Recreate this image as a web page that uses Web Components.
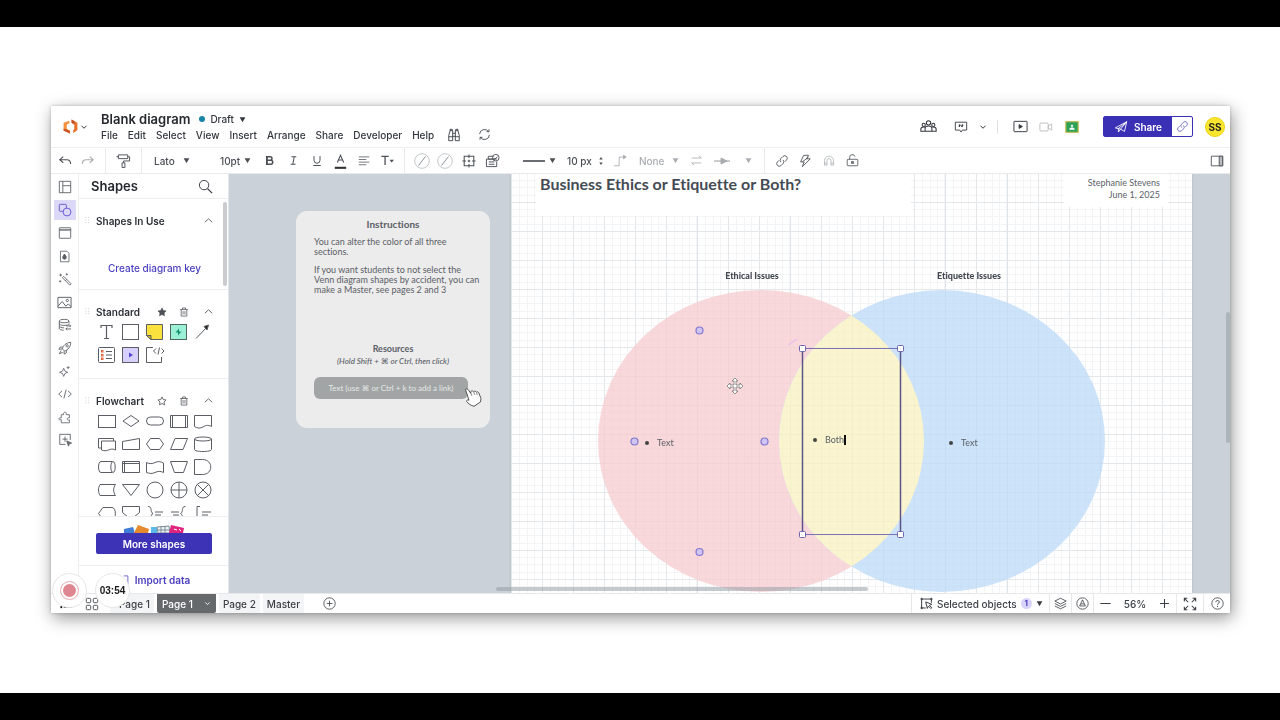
<!DOCTYPE html>
<html lang="en">
<head>
<meta charset="utf-8">
<title>Blank diagram</title>
<style>
  html, body { height: 100%; }
  body {
    margin: 0; background: #000; color: #33373d;
    font: 500 10px/12px Inter, "Liberation Sans", sans-serif;
  }
</style>
</head>
<body>
<app-stage>
  <diagram-app></diagram-app>
</app-stage>

<script>
const RESET = `
  *, *::before { box-sizing: border-box; }
  button, select, input { font: inherit; color: inherit; background: none; border: 0; padding: 0; margin: 0; outline: 0; appearance: none; }
  button { display: inline-flex; align-items: center; justify-content: center; white-space: nowrap; }
  h1, h2, h3, p, ul { margin: 0; padding: 0; font: inherit; }
  a { color: inherit; text-decoration: none; }
`;

function define(name, css, html) {
  customElements.define(name, class extends HTMLElement {
    constructor() {
      super();
      const root = this.attachShadow({ mode: 'open' });
      root.innerHTML = `<style>${RESET}${css}</style>${typeof html === 'function' ? html(this) : html}`;
    }
  });
}

/* ---------- icons: 16-unit box, one-unit strokes ---------- */
const ICONS = {
  logo: '<g stroke="none"><path fill="#f5903d" d="M1.500 4.500 7 2.500V5L4.500 6v4.500l3 1.500v2.500l-6-3z"/><path fill="#cf5424" d="M1.500 10l3 .5 3 1.500v2.500l-6-2.500z"/><path fill="#e8742c" d="M9 1.500 14.500 4.500v7L10.500 14v-2.500l1-.8V6L9 4.500z"/><path fill="#c94f20" d="M9 1.500l3 1.700-.5 2.800L9 4.500z"/></g>',
  chevron: '<path stroke-width="2" d="M3 5.500 8 10.500 13 5.500"/>',
  up: '<path stroke-width="1.500" d="M1.500 11 8 5l6.500 6"/>',
  caret: '<path fill="currentColor" stroke="none" d="M1.500 3h13L8 14z"/>',
  spin: '<path fill="currentColor" stroke="none" d="M4.500 5h7L8 0zM4.500 11h7L8 16z"/>',
  binoc: '<path d="M2 14.500v-6L3.500 3h3v11.500zM9.500 14.500V3h3L14 8.500v6zM6.500 6h3M6.500 9.500h3M2 10h4.500M9.500 10H14M3.500 3V1.500h2.500V3M10 3V1.500h2.500V3"/>',
  sync: '<path d="M2 7.500a6 6 0 0 1 11-3M14 8.500a6 6 0 0 1-11 3M13.500 1.500v3h-3M2.500 14.500v-3h3"/>',
  people: '<circle cx="8" cy="4.500" r="2"/><circle cx="3.500" cy="6.500" r="1.500"/><circle cx="12.500" cy="6.500" r="1.500"/><path d="M4.800 12.500v-2.500c0-1.700 1.200-2.500 3.200-2.500s3.200.8 3.200 2.500v2.500zM4.500 12.500H.8v-2c0-1.300.8-2 2.700-2h1M11.500 12.500h3.700v-2c0-1.300-.8-2-2.700-2h-1"/>',
  comment: '<path d="M1.500 2.500h13v9h-5L8 13.800 6.500 11.500h-5z"/><path fill="currentColor" d="M6 5.500h1v1L6 8zM9 5.500h1v1L9 8z"/>',
  play: '<rect x="1" y="2.500" width="14" height="11" rx=".5"/><path fill="currentColor" d="M6.500 6v4l3.500-2z"/>',
  camera: '<rect x="1" y="3.500" width="9.500" height="9" rx="1"/><path d="M10.500 7l4-2.500v7l-4-2.500z"/>',
  classroom: '<rect x="1" y="2" width="14" height="12" fill="#2da35a" stroke="#b9b43a" stroke-width="1.200"/><path fill="#fff" stroke="none" d="M8 5.300a1.300 1.300 0 1 1 0 2.600 1.300 1.300 0 0 1 0-2.600zM5 11c0-1.600 1.300-2.300 3-2.300s3 .7 3 2.300z"/>',
  plane: '<path d="M1.500 9 14.500 2l-2.500 11-4.500-2.500zM5 9.800 14.500 2l-7 8.500M5 9.800v4l2.500-3.300"/>',
  link: '<path d="M6.800 9.200a2.900 2.900 0 0 1 0-4.100l2.300-2.300a2.900 2.900 0 0 1 4.100 4.100l-1.800 1.800M9.200 6.800a2.900 2.900 0 0 1 0 4.100l-2.300 2.300a2.900 2.900 0 0 1-4.100-4.100l1.800-1.800"/>',
  undo: '<path stroke-width="1.200" d="M6 3 2 6.500 6 10M2 6.500h8c3 0 4.500 1.500 4.500 5"/>',
  redo: '<path stroke-width="1.200" d="M10 3l4 3.500L10 10M14 6.500H6c-3 0-4.500 1.500-4.500 5"/>',
  roller: '<path d="M2.500 2h10v4h-10zM12.500 4h2v4.500h-6.500v2M.5 4h2M6.500 10.500h3v5h-3z"/>',
  bold: '<path stroke-width="2.200" d="M4 2.500h5a2.600 2.600 0 0 1 0 5.200H4zM4 7.700h5.800a2.900 2.900 0 0 1 0 5.800H4zM4.500 2v12"/>',
  italic: '<path stroke-width="1.500" d="M5 2.500h7M4 13.500h7M9 2.500l-2 11"/>',
  underline: '<path stroke-width="1.300" d="M4 1.500V7a4 4 0 0 0 8 0V1.500M3 14h10"/>',
  color: '<path d="M4 10.500 8 1.500l4 9M5.300 7.500h5.400" stroke-width="1.300"/><path stroke-width="2.600" stroke="#333" d="M1 17h14"/>',
  align: '<path d="M1 2.500h14M1 6h10M1 9.500h14M1 13h10"/>',
  text: '<path stroke-width="1.600" d="M.5 3h9M5 3v10.500"/><path fill="currentColor" stroke="none" d="M10.500 7H16l-2.800 3.500z"/>',
  nofill: '<circle cx="8" cy="8" r="7.300" stroke="#c4c7ca"/><path stroke="#8e9296" d="M4.500 12.500l7-9"/>',
  frame: '<path stroke-width="1.200" d="M2.500 2.500h11v11h-11zM8 .5v4M8 11.500v4M.5 8h4M11.500 8h4M8 6.500v3M6.500 8h3"/>',
  stamp: '<path d="M9 3.500H3.500v3h9M1.500 6.500H11M1.500 6.500v8h11V9M4 9.500h6M4 12h6"/><circle cx="11.500" cy="5" r="3.500"/><path d="M10 5l1.200 1.200L13.200 4"/>',
  line: '<path stroke-width="1.200" d="M0 8h16"/>',
  elbow: '<path d="M1 13.500h6v-10h6"/><path fill="currentColor" d="M12 1.500v4l3-2z"/>',
  swap: '<path d="M2 5h12M11 2.500 14 5M14 11H2M5 13.500 2 11"/>',
  arrow: '<path stroke-width="1.200" d="M0 8h16"/><path fill="currentColor" d="M7 5v6l6-3z"/>',
  bolt: '<path d="M6.500 1.500h5.500L9.800 5.500H14L5 14.500l2-5.500H3z"/><path d="M12 3.500 5 9"/>',
  magnet: '<path d="M2 13.500V7.500a6 6 0 0 1 12 0v6h-3.300V7.500a2.700 2.700 0 0 0-5.400 0v6zM2 11h3.300M10.700 11H14"/>',
  lock: '<rect x="1.500" y="6.500" width="13" height="8" rx="1"/><path d="M4.500 6.500V4a3.300 3.300 0 0 1 6.500-.8"/><path stroke-width="1.300" d="M7 9.500h2v2H7z"/>',
  dock: '<path d="M1.500 2.500h13v11h-13z"/><path fill="#b6b9bd" d="M10.500 2.500h4v11h-4z"/>',
  layout: '<path d="M1.500 1.500h13v13h-13zM5.500 1.500v13M5.500 6.500h9"/>',
  shapes: '<rect x="1.500" y="1.500" width="8" height="8" rx="1"/><circle cx="10.300" cy="10.300" r="4.500" fill="#dcd8f8"/>',
  window: '<rect x="1.500" y="2" width="13" height="12" rx=".5"/><path d="M1.500 4.500h13" stroke-width="1.500"/>',
  theme: '<path d="M3 1.500h8L13.500 4v10.500H3z"/><path fill="currentColor" d="M8 5c1.500 2 2.200 3 2.200 4.200a2.200 2.200 0 0 1-4.400 0C5.800 8 6.500 7 8 5z"/>',
  wand: '<path d="M6.500 5 5 6.500l8.500 8.500L15 13.500zM8.500 10 10 8.500M3 2v3M1.500 3.500h3M10 1.500v2.400M8.800 2.700h2.400M2.500 9.500v2.400M1.300 10.700h2.400"/>',
  image: '<path d="M1 2.500h14v11H1zM1 12l4.500-5 4 5 2.500-2.500 3 3"/><circle cx="11" cy="5.800" r="1.200"/>',
  data: '<ellipse cx="7" cy="3.500" rx="5.500" ry="2"/><path d="M1.500 3.500v8.500c0 1 2.500 2 5 2M12.500 3.500V6M1.500 6.500c0 1 2.500 2 5.500 2s5.500-.8 5.500-2M1.500 9.300c0 1 2.500 2 5.500 2M9 9h5.500M13 7.500 14.500 9 13 10.500M15 12.500H9M10.500 11 9 12.500 10.500 14"/>',
  rocket: '<path d="M5 9c1-4 4-7 9.500-7.500C14.500 7 11.500 10 7.500 11.500zM5.500 7H2.500L1 9.500l4-.5M9.500 10.500v3L7 15v-3.500M3.500 11 1.500 14.500 5.500 13"/><circle cx="10.500" cy="5.500" r="1.300"/>',
  sparkle: '<path d="M7 4l1.500 3.500L12 9l-3.500 1.500L7 14l-1.500-3.500L2 9l3.500-1.500zM12.500 1.500v3.500M10.800 3.200h3.500"/>',
  code: '<path d="M4.500 4.500.8 8l3.700 3.500M11.500 4.500 15.200 8l-3.700 3.500M9.300 3 6.700 13"/>',
  puzzle: '<path d="M4 4.500h3C5.500.5 11.500.5 10 4.500h4v4c-3.500-1.200-3.500 3.700 0 2.500v3.500H4v-4C0 12 0 7.500 4 8.500z"/>',
  addshape: '<path d="M8.500 13H2V1.500h12V8M8 4v6M5 7h6"/><path fill="#777" d="M10 9l5.500 2.500-2.500.8-1 2.700z"/>',
  search: '<circle cx="6.500" cy="6.500" r="5"/><path d="M10.200 10.200 15 15" stroke-width="1.300"/>',
  grip: '<path stroke="#b9bcc0" stroke-width="1.500" stroke-dasharray="1.500 3" d="M5 2v13M10 2v13"/>',
  starfill: '<path fill="currentColor" d="M8 1.500l2 4.200 4.500.6-3.300 3.200.8 4.600L8 12l-4 2.100.8-4.600L1.500 6.300 6 5.700z"/>',
  star: '<path stroke-width="1.300" d="M8 1.500l2 4.200 4.500.6-3.300 3.200.8 4.600L8 12l-4 2.100.8-4.600L1.500 6.300 6 5.700z"/>',
  trash: '<path stroke-width="1.200" d="M2 4h12M5.500 4V1.500h5V4M3.500 4v10.500h9V4M6.500 6.500v5.500M9.500 6.500v5.500"/>',
  menu: '<path stroke-width="1.400" d="M4.500 12.500H15"/><path stroke="#111" stroke-width="2.400" d="M.5 12.500h2.200"/>',
  pages: '<rect x="1.500" y="1.500" width="5" height="5" rx="1.200"/><rect x="9.500" y="1.500" width="5" height="5" rx="1.200"/><rect x="1.500" y="9.500" width="5" height="5" rx="1.200"/><rect x="9.500" y="9.500" width="5" height="5" rx="1.200"/>',
  addpage: '<circle cx="8" cy="8" r="7"/><path d="M8 4.500v7M4.500 8h7"/>',
  pick: '<path stroke-width="1.200" d="M7 13.500H2v-11h12V7M2 1v3M.5 2.500h3M14 1v3M12.500 2.500h3M2 12v3M.5 13.500h3"/><path stroke-width="1.200" d="M7 6l7.500 3-3 1.200 3 3-1.200 1-3-3L9 14z"/>',
  layers: '<path d="M8 1.500 15 5 8 8.500 1 5zM1 8l7 3.500L15 8M1 11l7 3.500 7-3.500"/>',
  acircle: '<circle cx="8" cy="8" r="7"/><path d="M4.500 11 8 3.500l3.500 7.500zM6 8.500h4"/>',
  minus: '<path stroke-width="1.500" d="M.5 8h15"/>',
  plus: '<path stroke-width="1.500" d="M1.500 8h13M8 1.500v13"/>',
  expand: '<path stroke-width="1.200" d="M1.500 5V1.500H5M1.500 1.500 6 6M11 1.500h3.500V5M14.500 1.500 10 6M1.500 11v3.500H5M1.500 14.500 6 10M11 14.500h3.500V11M14.500 14.500 10 10"/>',
  help: '<circle cx="8" cy="8" r="7"/><path stroke-width="1.200" d="M6 6.300c0-2.600 4.200-2.600 4.200 0C10.200 7.800 8 7.800 8 9.500M8 11v1.300"/>',
  importbox: '<path d="M9 2.500h5.500v11H9M7 5l3 3-3 3"/>'
};
customElements.define('ui-icon', class extends HTMLElement {
  constructor() { super(); this.attachShadow({ mode: 'open' }); }
  connectedCallback() {
    this.shadowRoot.innerHTML = `<style>
      :host { display: inline-block; flex: none; width: var(--size, 14px); height: var(--size, 14px); }
      svg { display: block; width: 100%; height: 100%; overflow: visible; }
    </style><svg viewBox="0 0 16 16" fill="none" stroke="currentColor" aria-hidden="true">${ICONS[this.getAttribute('name')] || ''}</svg>`;
  }
});
const icon = (name, size) => `<ui-icon name="${name}"${size ? ` style="--size:${size}px"` : ''}></ui-icon>`;
const btn = (name, label, size, cls = '') => `<button type="button" class="${cls}" aria-label="${label}">${icon(name, size)}</button>`;

/* ---------- shape tiles: 24 x 20 box ---------- */
const SHAPES = {
  text: '<path stroke-width="1.200" d="M6 6V3.500h11V6M11.500 3.500v13M9 16.500h5"/>',
  box: '<rect x="3.500" y="2.500" width="16" height="15"/>',
  note: '<path fill="#fbe13e" d="M3.500 2.500h16v15H8l-4.500-4z"/><path fill="#d8bd20" d="M3.500 13.500H8v4z"/>',
  green: '<rect x="3.500" y="2.500" width="16" height="15" fill="#9bf0d6" stroke="#51655f"/><path fill="#14946d" stroke="none" d="M12 6.500 8.500 10.500H11v3l3.500-4H12z"/>',
  arrow: '<path d="M5 16.500 16 5"/><path fill="#222" d="M13 4.500 17.500 3 16 8z"/>',
  list: '<rect x="3.500" y="2.500" width="16" height="15" rx="1"/><path d="M11 6.500h6M11 10h6M11 13.500h6"/><g stroke="#e0603a"><rect x="6.500" y="5.500" width="1.500" height="1.500"/><rect x="6.500" y="9.500" width="1.500" height="1.500"/><rect x="6.500" y="13" width="1.500" height="1.500"/></g>',
  purple: '<rect x="3.500" y="2.500" width="16" height="15" fill="#d7cffc"/><path fill="#5346c9" stroke="none" d="M10 7.500v5l4-2.500z"/>',
  codebox: '<path d="M10 2.500H3.500v15h15V12"/><path d="M13 3.500 10.500 6 13 8.500M18.500 3.500 21 6l-2.500 2.500M16.500 2.500 15 9.500"/>',
  rect: '<rect x="3.500" y="4.500" width="17" height="12"/>',
  diamond: '<path d="M12 4.500 20 10l-8 5.500L4 10z"/>',
  pill: '<rect x="3.500" y="6" width="17" height="8" rx="4"/>',
  process: '<path d="M3.500 4.500h17v12h-17zM5.500 4.500v12M18.500 4.500v12"/>',
  doc: '<path d="M3.500 4.500h17v11c-4-2-6-1-8.500.5-3 1.500-5.500 1.500-8.500-.5z"/>',
  docs: '<path d="M6.500 7h14v9c-3-1.500-4.500-1-7 0s-4.500 1-7 0zM6.500 14H3.500V4.500h15V7"/>',
  manual: '<path d="M3.500 7.500 20.500 4.500v11h-17z"/>',
  hex: '<path d="M7.500 4.500h9L20.500 10l-4 5.500h-9L3.500 10z"/>',
  para: '<path d="M8 4.500h12.500l-4.500 11H3.500z"/>',
  cyl: '<path d="M3.500 5v10.500c0 1.300 4 2 8.500 2s8.500-.7 8.500-2V5"/><ellipse cx="12" cy="5" rx="8.500" ry="2"/>',
  das: '<path d="M17 4.500H6c-3.300 0-3.300 11 0 11h11"/><ellipse cx="18" cy="10" rx="2.200" ry="5.500"/>',
  storage: '<path d="M3.500 4.500h17v11h-17zM5.500 4.500v11M3.500 6.500h17"/>',
  tape: '<path d="M3.500 5.500c3 1.500 5.500 1.500 8.500 0s5.500-1 8.500.5v9.500c-3-1.500-5.500-1.500-8.500 0s-5.500 1-8.500 0z"/>',
  trap: '<path d="M3.500 4.500h17l-4 11h-9z"/>',
  delay: '<path d="M3.500 2.500h8c11 0 11 15 0 15h-8z"/>',
  stored: '<path d="M5 4.500h15.500c-2.500 3.500-2.500 7.500 0 11H5c-2-3.500-2-7.500 0-11z"/>',
  merge: '<path d="M3.500 4.500h17L12 15.500z"/>',
  circle: '<circle cx="12" cy="10" r="8"/>',
  or: '<circle cx="12" cy="10" r="8"/><path d="M12 2v16M4 10h16"/>',
  sum: '<circle cx="12" cy="10" r="8"/><path d="M6.300 4.300l11.400 11.400M17.700 4.300 6.300 15.700"/>',
  display: '<path d="M8 4.500h9c4.500 0 4.500 12 0 12H8L3.500 10.500z"/>',
  offpage: '<path d="M3.500 3.500h17v6L12 16.500l-8.500-7z"/>',
  braceL: '<path d="M5 3.500c5 0 1.500 5.500 5 7-3.500 1.500 0 7-5 7M12 9h8M12 12h6"/>',
  braceR: '<path d="M18.500 3.500c-5 0-1.500 5.500-5 7 3.500 1.500 0 7 5 7M4 9h8M6 12h6"/>',
  bracket: '<path d="M9 3.500H6v14h3M11 9h9M11 12h6"/>'
};
const tile = n => `<button type="button" aria-label="${n}"><svg viewBox="0 0 24 20" width="24" height="20" fill="none" stroke="#5a5e64">${SHAPES[n]}</svg></button>`;

/* ---------- page frame ---------- */
define('app-stage', `
  :host { display: flex; min-height: 100vh; box-sizing: border-box; padding: 27px 0; background: #000; }
  main { flex: 1; min-width: 0; display: flex; background: #fff; padding: 79px 50px 80px 51px; }
  ::slotted(*) { flex: 1; min-width: 0; }
`, `<main><slot></slot></main>`);

define('diagram-app', `
  :host { position: relative; display: flex; flex-direction: column; background: #fff; box-shadow: 2px 5px 16px rgba(0,0,0,.42), 0 0 3px rgba(0,0,0,.2); }
  .body { flex: 1; min-height: 0; display: grid; grid-template-columns: 28px 150px minmax(0, 1fr); }
  screen-recorder { position: absolute; left: 0; bottom: 5px; }
`, `
  <app-header></app-header>
  <format-bar></format-bar>
  <div class="body"><side-rail></side-rail><shape-panel></shape-panel><diagram-canvas></diagram-canvas></div>
  <status-bar></status-bar>
  <screen-recorder></screen-recorder>
`);

define('app-header', `
  :host { display: flex; align-items: center; height: 42px; padding: 0 5px 0 11px; border-bottom: 1px solid #eceef0; box-sizing: border-box; }
  .logo { gap: 1px; width: 26px; justify-content: flex-start; margin-right: 13px; }
  .doc { flex: 1; min-width: 0; }
  .title, nav { display: flex; align-items: center; }
  .title { height: 16px; }
  h1 { font-size: 13px; line-height: 16px; font-weight: 600; margin-right: 9px; color: #25282d; }
  .draft { gap: 5px; }
  .draft::before { content: ""; width: 6px; height: 6px; border-radius: 3px; background: #1a83a8; }
  nav { gap: 10px; height: 15px; }
  .right { display: flex; align-items: center; }
  .i { width: 26px; height: 20px; }
  .gap { margin-right: 7px; }
  .n { width: 20px; }
  .c { width: 17px; }
  .sep { width: 1px; height: 14px; background: #dfe1e4; margin: 0 9px 0 6px; }
  .dim { color: #b7babd; }
  .share { display: flex; height: 21px; margin: 0 12px 0 18px; border: 1px solid #3a30b5; border-radius: 2px; }
  .share .go { width: 68px; gap: 6px; background: #3a30b5; color: #fff; font-weight: 600; }
  .share .url { width: 20px; color: #5d55c4; }
  .me { width: 20px; height: 20px; border-radius: 10px; background: #f9e52e; border: 1px solid #ecd50d; font-weight: 700; color: #222; }
`, `
  <button type="button" class="logo" aria-label="Home">${icon('logo', 17)}${icon('chevron', 8)}</button>
  <div class="doc">
    <div class="title"><h1>Blank diagram</h1><button type="button" class="draft">Draft ${icon('caret', 7)}</button></div>
    <nav>${['File','Edit','Select','View','Insert','Arrange','Share','Developer','Help'].map(t => `<button type="button">${t}</button>`).join('')}
      ${btn('binoc', 'Find', 14, 'n')}${btn('sync', 'Sync', 13, 'n')}</nav>
  </div>
  <div class="right">
    ${btn('people', 'Collaborators', 17, 'i gap')}${btn('comment', 'Comments', 14, 'i')}${btn('chevron', 'Comment options', 8, 'c')}
    <span class="sep"></span>
    ${btn('play', 'Present', 15, 'i')}${btn('camera', 'Video', 14, 'i dim')}${btn('classroom', 'Classroom', 14, 'i')}
    <div class="share"><button type="button" class="go">${icon('plane', 14)}Share</button>${btn('link', 'Copy link', 13, 'url')}</div>
    <button type="button" class="me" aria-label="Account">SS</button>
  </div>
`);

define('pick-list', `
  :host { display: inline-flex; align-items: center; flex: none; }
  label { display: flex; flex: 1; align-items: center; justify-content: space-between; }
  select { flex: 1; min-width: 0; height: 14px; }
`, el => `<label><select aria-label="${el.getAttribute('label')}"><option>${el.getAttribute('value')}</option></select>${icon('caret', 7)}</label>`);

define('format-bar', `
  :host { display: flex; align-items: center; height: 26px; padding-right: 4px; border-bottom: 1px solid #e8eaec; box-sizing: border-box; --size: 14px; color: #4b4f55; }
  .g { display: flex; align-items: center; height: 100%; flex: none; }
  .g > button { flex: 1; height: 20px; }
  .hist { width: 55px; padding: 0 6px 0 2px; }
  .paint { width: 36px; }
  .line { border-right: 1px solid #e8eaec; }
  .font { width: 36px; margin: 0 30px 0 12px; }
  .size { width: 31px; margin-right: 7px; }
  .style { width: 147px; padding-right: 5px; }
  .fill { width: 94px; margin-left: 5px; }
  .stroke { width: 33px; margin: 0 11px 0 19px; justify-content: space-between; }
  .stroke > button { flex: none; }
  .width { width: 37px; margin-right: 9px; }
  .width input { width: 30px; }
  .kind { width: 40px; margin: 0 4px 0 12px; }
  .ends { width: 82px; padding-right: 2px; }
  .acts { width: 94px; margin-left: 5px; }
  .off { color: #a9acb0; }
  .push { margin-left: auto; width: 18px; height: 20px; }
`, `
  <div class="g hist line">${btn('undo', 'Undo')}${btn('redo', 'Redo', 14, 'off')}</div>
  <div class="g paint line">${btn('roller', 'Copy format', 15)}</div>
  <pick-list class="font" label="Font" value="Lato"></pick-list>
  <pick-list class="size" label="Font size" value="10pt"></pick-list>
  <div class="g style line">${btn('bold', 'Bold', 11)}${btn('italic', 'Italic', 11)}${btn('underline', 'Underline', 12)}${btn('color', 'Text color', 13)}${btn('align', 'Align', 12)}${btn('text', 'Text options', 13)}</div>
  <div class="g fill">${btn('nofill', 'Fill', 16)}${btn('nofill', 'Line color', 16)}${btn('frame', 'Border')}${btn('stamp', 'Style', 15)}</div>
  <div class="g stroke">${btn('line', 'Line style', 22)}${icon('caret', 7)}</div>
  <label class="g width"><input value="10 px" aria-label="Line width">${icon('spin', 8)}</label>
  <div class="g off">${btn('elbow', 'Connector', 14)}</div>
  <pick-list class="kind off" label="Line end" value="None"></pick-list>
  <div class="g ends off line">${btn('swap', 'Swap ends', 13)}${btn('arrow', 'Arrow', 16)}${btn('caret', 'Arrow options', 7)}</div>
  <div class="g acts">${btn('link', 'Link')}${btn('bolt', 'Actions')}${btn('magnet', 'Snap', 12, 'off')}${btn('lock', 'Lock', 13)}</div>
  ${btn('dock', 'Right panel', 14, 'push')}
`);

define('side-rail', `
  :host { display: flex; flex-direction: column; align-items: center; gap: 3px; padding-top: 3px; border-right: 1px solid #eceef0; color: #5a5e64; }
  button { width: 22px; height: 20px; border-radius: 1px; }
  .on { background: #dcd8f8; color: #5a50c8; }
`, [['layout',14],['shapes',14],['window',14],['theme',13],['wand',14],['image',15],['data',14],['rocket',14],['sparkle',13],['code',14],['puzzle',13],['addshape',14]]
  .map(([n, s]) => btn(n, n, s, n === 'shapes' ? 'on' : '')).join(''));

define('shape-section', `
  :host { display: block; }
  header { display: flex; align-items: center; height: 17px; padding: 0 15px 0 4px; color: #4c5056; }
  h3 { flex: 1; font-size: 10px; font-weight: 600; color: #2c3036; padding-left: 4px; white-space: nowrap; }
  .tools { display: flex; gap: 12px; margin-right: 15px; }
`, el => `<header>${icon('grip', 9)}<h3>${el.getAttribute('heading')}</h3>
  ${el.hasAttribute('star') ? `<span class="tools">${btn(el.getAttribute('star'), 'Favorite', 10)}${btn('trash', 'Remove', 10)}</span>` : ''}
  ${btn('up', 'Collapse', 9)}</header><slot></slot>`);

define('shape-panel', `
  :host { position: relative; display: flex; flex-direction: column; min-height: 0; border-right: 1px solid #e3e6e9; }
  .head { display: flex; align-items: center; justify-content: space-between; height: 25px; padding: 0 15px 0 12px; border-bottom: 1px solid #eceef0; flex: none; }
  h2 { font-size: 13px; line-height: 16px; font-weight: 600; color: #25282d; }
  .list { flex: 1 1 0; min-height: 0; overflow: hidden; }
  shape-section { padding: 13px 0 11px; border-bottom: 1px solid #eceef0; }
  .key { display: block; text-align: center; color: #4a3fc0; line-height: 16px; padding: 31px 0 2px 2px; }
  .tiles { display: grid; grid-template-columns: repeat(5, 24px); grid-auto-rows: 23px; padding: 0 0 1px 16px; }
  .thumb { position: absolute; right: 1px; top: 28px; width: 4px; height: 84px; border-radius: 2px; background: #c9cbce; }
  .more { flex: none; border-top: 1px solid #eceef0; padding: 8px 16px 11px 17px; display: flex; flex-direction: column; }
  .more svg { display: block; align-self: center; }
  .more button { height: 21px; border-radius: 2px; background: #3d33b6; color: #fff; font-weight: 600; }
  .import { flex: none; display: flex; align-items: center; justify-content: center; gap: 6px; height: 28px; border-top: 1px solid #eceef0; color: #4a3fc0; font-weight: 600; }
`, `
  <div class="head"><h2>Shapes</h2>${btn('search', 'Search shapes', 15)}</div>
  <div class="list">
    <shape-section heading="Shapes In Use"><a class="key" href="#key">Create diagram key</a></shape-section>
    <shape-section heading="Standard" star="starfill"><div class="tiles">${['text','box','note','green','arrow','list','purple','codebox'].map(tile).join('')}</div></shape-section>
    <shape-section heading="Flowchart" star="star"><div class="tiles">${['rect','diamond','pill','process','doc','docs','manual','hex','para','cyl','das','storage','tape','trap','delay','stored','merge','circle','or','sum','display','offpage','braceL','braceR','bracket'].map(tile).join('')}</div></shape-section>
  </div>
  <div class="thumb"></div>
  <div class="more">
    <svg width="62" height="8" viewBox="0 0 62 8" aria-hidden="true">
      <path fill="#3f7fd8" d="M1 4l9-2 2 6H1z"/><path fill="#e58a2c" d="M15 0l11 4-1 4H11z"/><path fill="#5cb8e8" d="M28 2h6v6h-6z"/><path fill="#eef3f6" stroke="#7d8c96" d="M34 2l12-1 1 7H35zM38 1v7M42 1v7M34 5h12"/><path fill="#e0257f" d="M48 0l13 3-1 5H46z"/><path stroke="#fff" d="M51 4l3 1M56 4l2 2"/>
    </svg>
    <button type="button">More shapes</button>
  </div>
  <a class="import" href="#import">${icon('importbox', 12)}Import data</a>
`);

/* ---------- free canvas: objects sit at document coordinates ---------- */
define('diagram-canvas', `
  :host { position: relative; display: block; overflow: hidden; background: #cad1d8; font-family: Lato, "DejaVu Sans", sans-serif; font-variant-ligatures: none; color: #5b6067; }
  .page { position: absolute; left: 282px; right: 38px; top: 0; bottom: 0; background: #fff; box-shadow: 0 0 2px #a9b0b8; overflow: hidden; }
  .page > svg { position: absolute; left: 0; top: 0; width: 100%; height: 100%; }
  .mask { position: absolute; background: #fff; }
  .title { left: 25px; top: 0; width: 375px; height: 42px; padding: 1px 4px; }
  .title h1 { font-size: 16px; line-height: 18px; font-weight: 700; color: #454b54; white-space: nowrap; }
  .by { left: 553px; top: 0; width: 104px; height: 33px; padding: 3px 8px; text-align: right; font-size: 9px; line-height: 12px; font-weight: 400; color: #5d6269; white-space: nowrap; }
  h2 { position: absolute; top: 95px; width: 120px; text-align: center; font-size: 9px; line-height: 14px; font-weight: 900; color: #454a52; }
  .a { left: 181px; } .b { left: 398px; }
  ul { position: absolute; list-style: none; display: flex; align-items: center; gap: 8px; font-size: 9px; line-height: 12px; font-weight: 400; top: 263px; }
  ul::before { content: ""; width: 4px; height: 4px; border-radius: 2px; background: #444; }
  .t1 { left: 134px; } .t2 { left: 302px; top: 261px; } .t3 { left: 438px; }
  .t2 li { border-right: 2px solid #111; line-height: 10px; }
  .card { position: absolute; left: 67px; top: 37px; width: 194px; height: 217px; border-radius: 11px; background: #ececec; padding: 6px 18px; font-size: 9px; display: flex; flex-direction: column; }
  .card h3 { text-align: center; font-weight: 700; font-size: 10px; line-height: 14px; }
  .card p { font-weight: 400; line-height: 10px; margin-top: 6px; white-space: nowrap; }
  .card p + p { margin-top: 8px; }
  .card h3.res { font-size: 9px; line-height: 12px; margin-top: 48px; }
  .card em { text-align: center; line-height: 12px; white-space: nowrap; font-size: 8px; }
  .card button { height: 22px; width: 154px; border-radius: 6px; margin-top: 10px; background: #a2a5a5; color: #e6e8e8; font-weight: 400; font-size: 8px; }
  .hand { position: absolute; left: 235px; top: 213px; }
  .bar { position: absolute; border-radius: 2px; background: rgba(150,158,166,.55); }
  .h { left: 267px; bottom: 2px; width: 372px; height: 4px; }
  .v { right: 0; top: 138px; width: 4px; height: 131px; }
`, `
  <div class="page">
    <svg aria-hidden="true">
      <defs>
        <pattern id="g" width="31" height="29" y="28" patternUnits="userSpaceOnUse">
          <path d="M8 0v29M16 0v29M23 0v29M0 7h31M0 14h31M0 22h31" stroke="#f6f7f8" transform="translate(.5 .5)"/>
          <path d="M0 0v29M0 0h31" stroke="#ebedef" transform="translate(.5 .5)"/>
        </pattern>
        <clipPath id="c"><ellipse cx="250" cy="267" rx="163" ry="151"/></clipPath>
      </defs>
      <rect width="100%" height="100%" fill="url(#g)"/>
      <path d="M186 0v420M279 0v420M434 0v420M496 0v420" stroke="#dcdfe2" stroke-opacity=".6"/>
      <ellipse cx="250" cy="267" rx="163" ry="151" fill="#f8d8db"/>
      <ellipse cx="431" cy="267" rx="163" ry="151" fill="#cde3f9"/>
      <ellipse cx="431" cy="267" rx="163" ry="151" fill="#faf5cf" clip-path="url(#c)"/>
      <rect width="100%" height="100%" fill="url(#g)" opacity=".35" style="mix-blend-mode:multiply"/>
      <path d="M277 171l9-6" stroke="#f0c4e6" stroke-width="2"/>
      <path d="M291 174.500h98M291 360.500h98" stroke="#7a74b4"/>
      <path d="M291.500 174v186M389.500 174v186" stroke="#5b5488" stroke-width="1.500"/>
      <g fill="#fff" stroke="#6d66ae"><rect x="288.500" y="171.500" width="6" height="6" rx="1"/><rect x="386.500" y="171.500" width="6" height="6" rx="1"/><rect x="288.500" y="357.500" width="6" height="6" rx="1"/><rect x="386.500" y="357.500" width="6" height="6" rx="1"/></g>
      <g fill="#cfc4f3" stroke="#8277d0" stroke-width="1.200"><circle cx="188.500" cy="156.500" r="3.500"/><circle cx="123.500" cy="267.500" r="3.500"/><circle cx="253.500" cy="267.500" r="3.500"/><circle cx="188.500" cy="378" r="3.500"/></g>
      <g transform="translate(224 212)" fill="#fff" stroke="#777" stroke-width=".8"><path d="M0-8 3-5H1v4h4v-2l3 3-3 3V1H1v4h2L0 8-3 5h2V1h-4v2l-3-3 3-3v2h4v-4h-2z"/></g>
    </svg>
    <div class="mask title"><h1>Business Ethics or Etiquette or Both?</h1></div>
    <div class="mask by">Stephanie Stevens<br>June 1, 2025</div>
    <h2 class="a">Ethical Issues</h2><h2 class="b">Etiquette Issues</h2>
    <ul class="t1"><li>Text</li></ul><ul class="t2"><li>Both</li></ul><ul class="t3"><li>Text</li></ul>
  </div>
  <div class="card">
    <h3>Instructions</h3>
    <p>You can alter the color of all three<br>sections.</p>
    <p>If you want students to not select the<br>Venn diagram shapes by accident, you can<br>make a Master, see pages 2 and 3</p>
    <h3 class="res">Resources</h3>
    <em>(Hold Shift + ⌘ or Ctrl, then click)</em>
    <button type="button">Text (use ⌘ or Ctrl + k to add a link)</button>
  </div>
  <svg class="hand" width="20" height="22" viewBox="0 0 20 22" aria-hidden="true"><path fill="#fff" stroke="#555" d="M1.500 2.500c1-1 2.300-.6 3 .5l2.300 3.500V4.500c1-1 2.300-.8 2.900.3.900-1 2.200-.7 2.700.4.900-.7 2-.3 2.400.7l2.200 5.600-.5 3.500-6.500 4.300c-3-.8-5.500-2.300-7.500-5 .2-1.300 1.300-1.800 2.500-1z"/><path fill="none" stroke="#777" stroke-width=".8" d="M6.800 6.500 8 9M9.700 5l1.200 3M12.400 5.500l1 2.500"/></svg>
  <div class="bar h"></div><div class="bar v"></div>
`);

define('status-bar', `
  :host { display: flex; align-items: stretch; height: 20px; border-top: 1px solid #e6e8ea; box-sizing: border-box; color: #3b3f45; }
  .s { width: 26px; }
  .first { margin-left: 2px; }
  .tabs { display: flex; gap: 3px; margin: 0 13px 0 5px; }
  .tabs button { padding: 0 4px; background: #f3f4f5; }
  .tabs .lead { padding-left: 9px; }
  .tabs .on { background: #66696c; color: #fff; gap: 11px; padding: 0 5px; border-radius: 0 0 2px 2px; }
  .add { width: 24px; }
  .right { margin-left: auto; display: flex; border-left: 1px solid #e6e8ea; }
  .right > * { border-right: 1px solid #e6e8ea; }
  .right > :last-child { border: 0; }
  .sel { gap: 4px; width: 138px; justify-content: flex-start; padding-left: 8px; }
  .sel b { width: 11px; height: 11px; border-radius: 6px; background: #d9d2fb; color: #4a3fc0; font-size: 8px; line-height: 11px; }
  .w { width: 22px; }
  .e { width: 27px; }
  .zoom { display: flex; align-items: center; justify-content: space-between; width: 83px; padding: 0 6px; }
`, `
  ${btn('menu', 'Outline', 13, 's first')}${btn('pages', 'Page grid', 14, 's')}
  <div class="tabs"><button type="button" class="lead">Page 1</button><button type="button" class="on">Page 1 ${icon('chevron', 7)}</button><button type="button">Page 2</button><button type="button">Master</button></div>
  ${btn('addpage', 'Add page', 13, 'add')}
  <div class="right">
    <button type="button" class="sel">${icon('pick', 13)}<span>Selected objects</span><b>1</b>${icon('caret', 7)}</button>
    ${btn('layers', 'Layers', 13, 'w')}${btn('acircle', 'Accessibility', 13, 'w')}
    <div class="zoom">${btn('minus', 'Zoom out', 11)}<span>56%</span>${btn('plus', 'Zoom in', 11)}</div>
    ${btn('expand', 'Fit to screen', 14, 'e')}${btn('help', 'Help', 13, 's')}
  </div>
`);

define('screen-recorder', `
  :host { display: flex; gap: 8px; padding-left: 1px; }
  button, time { width: 35px; height: 35px; border-radius: 18px; background: #fff; border: 1px solid #e8e6e6; display: flex; align-items: center; justify-content: center; }
  button::before { content: ""; width: 19px; height: 19px; padding: 2px; border-radius: 10px; border: 1px solid #e8a9ae; background: #df8690 content-box; }
  time { font: 700 10px/12px "Liberation Sans", sans-serif; color: #1b1b1b; }
`, `<button type="button" aria-label="Stop recording"></button><time>03:54</time>`);
</script>
</body>
</html>
